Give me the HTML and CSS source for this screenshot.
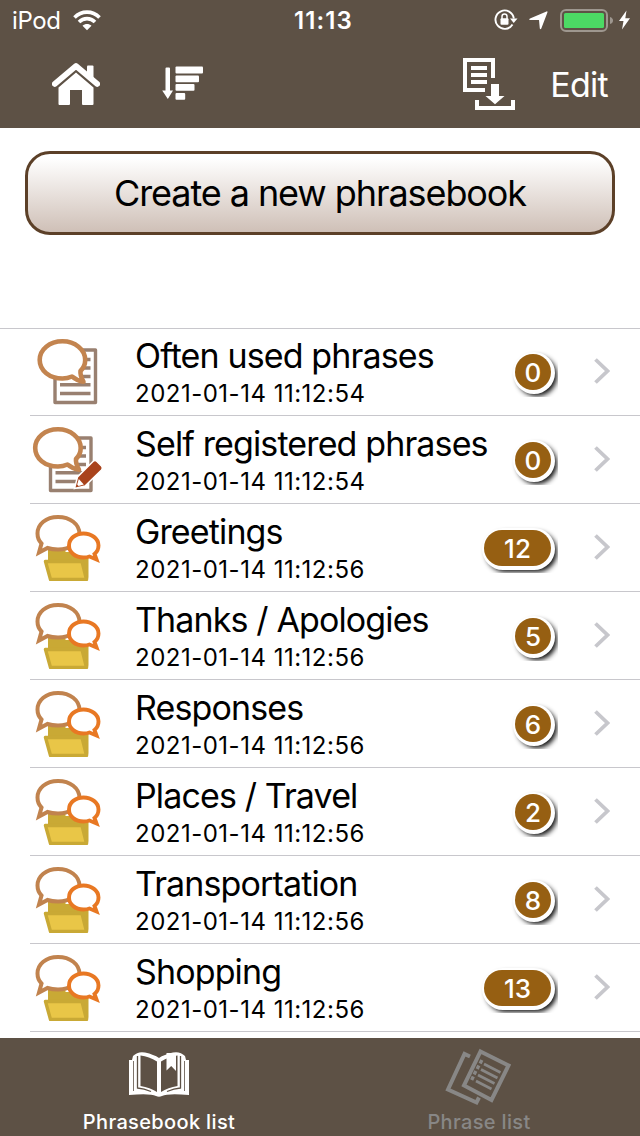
FILE: index.html
```html
<!DOCTYPE html>
<html lang="en">
<head>
    <meta charset="UTF-8">
    <meta name="viewport" content="width=device-width, initial-scale=1.0">
    <title>Phrasebook list</title>
    <link rel="stylesheet" href="styles.css">
</head>
<body>
    <!-- Shared row icons -->
    <svg class="sprite" aria-hidden="true">
        <symbol id="icon-sheet" viewBox="0 0 70 70">
            <path d="M21 15H61.500V67.500H21Z" fill="#fff" stroke="#998070" stroke-width="3.400" stroke-linejoin="round"/>
            <path d="M26 24.500H56.500M26 33H56.500M26 41.500H56.500M26 49.800H56.500M26 58.500H56.500" stroke="#998070" stroke-width="3.600"/>
            <path d="M28.500 6.300C41 6.300 51.200 14.500 51.200 25C51.200 29.500 49.500 33 46.500 36C46 40.500 47.500 43 49.500 46.800C45 46 41 44 38 41.500C35 42.800 32 43.500 28.500 43.500C15.500 43.500 5.700 35.500 5.700 25C5.700 14.500 15.500 6.300 28.500 6.300Z" fill="#fff" stroke="#c3844f" stroke-width="4.600" stroke-linejoin="round"/>
        </symbol>
        <symbol id="icon-folder" viewBox="0 0 70 70">
            <path d="M14 37H31.500V41H54.500V66Q54.500 70 51 70H16.500L14 63Z" fill="#c9a935"/>
            <path d="M11.500 50.500H48L52.500 68.500H16.500Z" fill="#e9c647" stroke="#c9a935" stroke-width="3.400" stroke-linejoin="round"/>
            <path d="M24 6C36 6 45.500 13 45.500 23C45.500 32 36 38.500 24 38.500C20 38.500 16.500 38 13.500 37L5 41.500L7.500 32.500C4.500 29.500 3.500 26 3.500 22.500C3.500 13 12 6 24 6Z" fill="#fff" stroke="#c1834e" stroke-width="4"/>
            <path d="M49.500 22.500C57.500 22.500 64.500 27.500 64.500 34.500C64.500 38 63 41 60.500 43L62.500 48.500L55.500 45.500C53.500 46.300 51.500 46.500 49.500 46.500C41.500 46.500 35 41.500 35 34.500C35 27.500 41.500 22.500 49.500 22.500Z" fill="#fff" stroke="#e87823" stroke-width="3.900"/>
        </symbol>
        <symbol id="icon-chevron" viewBox="0 0 16 26">
            <path d="M1.500 1.500L13.500 13L1.500 24.500" fill="none" stroke="#c7c7cc" stroke-width="3.800"/>
        </symbol>
    </svg>

    <header class="header">
        <div class="status-bar">
            <div class="status-left">
                <span class="device">iPod</span>
                <svg width="28" height="21" viewBox="0 0 28 21" fill="none" stroke="#fff">
                    <path d="M1.500 7.500C8.500 .3 19.500 .3 26.500 7.500" stroke-width="3.600"/>
                    <path d="M6 12C10.500 7.500 17.500 7.500 22 12" stroke-width="3.600"/>
                    <path d="M9.500 15.700C12 13.300 16 13.300 18.500 15.700L14 20.200Z" fill="#fff" stroke="none"/>
                </svg>
            </div>
            <div class="clock">11:13</div>
            <div class="status-right">
                <!-- Rotation lock -->
                <svg class="rotation" width="24" height="22" viewBox="0 0 24 22" fill="none" stroke="#fff">
                    <path d="M18.500 15.500A9.200 9.200 0 1 1 19.800 9.500" stroke-width="1.900"/>
                    <path d="M16 9.500H23.500L19.700 14Z" fill="#fff" stroke="none"/>
                    <rect x="6.500" y="9.300" width="8" height="6.500" rx="1" fill="#fff" stroke="none"/>
                    <path d="M8 10V7.500Q8 5 10.500 5T13 7.500V10" stroke-width="1.500"/>
                </svg>
                <svg class="location" width="19" height="19" viewBox="0 0 19 19">
                    <path d="M17.500 .4Q18.800 0 18.400 1.400L12.300 17.500Q11.500 19 10.800 17.500L10 9H1Q-.6 8.400 1 7.400Z" fill="#fff"/>
                </svg>
                <svg class="battery" width="54" height="24" viewBox="0 0 54 24">
                    <rect x="1" y="1" width="46" height="21" rx="5" fill="none" stroke="#9e978f" stroke-width="2"/>
                    <rect x="4" y="4" width="40" height="15" rx="1.500" fill="#4cd964"/>
                    <path d="M50 8Q53 9 53 11.500T50 15Z" fill="#9e978f"/>
                </svg>
                <svg width="13" height="20" viewBox="0 0 13 20">
                    <path d="M8.500 .5L1 11H5.500L4 19.500L12 8.300H7.300Z" fill="#fff"/>
                </svg>
            </div>
        </div>
        <nav class="toolbar">
            <svg class="home" width="48" height="43" viewBox="0 0 48 43">
                <path d="M35 12V3.500Q35 2.500 36 2.500H40.500Q41.500 2.500 41.500 3.500V17Z" fill="#fff"/>
                <path d="M2.700 21L24 3L45.300 21" fill="none" stroke="#fff" stroke-width="5.600" stroke-linecap="round" stroke-linejoin="round"/>
                <path d="M24 9.500L41.500 24.500V41Q41.500 42 40.500 42H31Q30 42 30 41V27H18V41Q18 42 17 42H7.500Q6.500 42 6.500 41V24.500Z" fill="#fff"/>
            </svg>
            <svg class="sort" width="42" height="36" viewBox="0 0 42 36" fill="#fff">
                <path d="M3.500 2.500Q3.500 1.500 4.500 1.500H7Q8 1.500 8 2.500V24.500H11L5.800 33L.2 24.500H3.500Z"/>
                <rect x="13.500" y=".5" width="27.500" height="7" rx="1"/>
                <rect x="13.500" y="9.500" width="23.500" height="6.700" rx="1"/>
                <rect x="13.500" y="18" width="19" height="6.700" rx="1"/>
                <rect x="13.500" y="27" width="9.700" height="6.700" rx="1"/>
            </svg>
            <!-- Import list -->
            <svg class="import" width="52" height="52" viewBox="0 0 52 52" fill="none" stroke="#fff" stroke-width="4">
                <path d="M22 32H2V2H30V20"/>
                <path d="M8 10H24M8 17H24M8 24H24"/>
                <path d="M14 42V50H50V42"/>
                <path d="M28 26H36V38H41.500L32 46.300L22.500 38H28Z" fill="#fff" stroke="none"/>
            </svg>
            <span class="edit">Edit</span>
        </nav>
    </header>

    <main class="content">
        <button class="create-btn"><span>Create a new phrasebook</span></button>

        <ul class="phrasebooks">
            <li class="row">
                <svg class="row-icon"><use href="#icon-sheet"/></svg>
                <div class="info"><div class="title">Often used phrases</div><div class="date">2021-01-14 11:12:54</div></div>
                <div class="badge-box"><span class="badge">0</span></div>
                <svg class="chevron"><use href="#icon-chevron"/></svg>
            </li>
            <li class="row">
                <svg class="row-icon" viewBox="0 0 70 70">
                    <use href="#icon-sheet" x="-4.500" width="70" height="70"/>
                    <path d="M40.500 65.500L43.500 54L59 38.500Q61 36.500 63 38.500L67.500 43Q69.300 45 67.500 47L51 63Z" fill="#a9431c" stroke="#fff" stroke-width="1.500"/>
                    <path d="M44.800 56L49.800 61.500L44.500 63L43.200 61.500Z" fill="#fff"/>
                </svg>
                <div class="info"><div class="title">Self registered phrases</div><div class="date">2021-01-14 11:12:54</div></div>
                <div class="badge-box"><span class="badge">0</span></div>
                <svg class="chevron"><use href="#icon-chevron"/></svg>
            </li>
            <li class="row">
                <svg class="row-icon"><use href="#icon-folder"/></svg>
                <div class="info"><div class="title">Greetings</div><div class="date">2021-01-14 11:12:56</div></div>
                <div class="badge-box"><span class="badge wide">12</span></div>
                <svg class="chevron"><use href="#icon-chevron"/></svg>
            </li>
            <li class="row">
                <svg class="row-icon"><use href="#icon-folder"/></svg>
                <div class="info"><div class="title">Thanks / Apologies</div><div class="date">2021-01-14 11:12:56</div></div>
                <div class="badge-box"><span class="badge">5</span></div>
                <svg class="chevron"><use href="#icon-chevron"/></svg>
            </li>
            <li class="row">
                <svg class="row-icon"><use href="#icon-folder"/></svg>
                <div class="info"><div class="title">Responses</div><div class="date">2021-01-14 11:12:56</div></div>
                <div class="badge-box"><span class="badge">6</span></div>
                <svg class="chevron"><use href="#icon-chevron"/></svg>
            </li>
            <li class="row">
                <svg class="row-icon"><use href="#icon-folder"/></svg>
                <div class="info"><div class="title">Places / Travel</div><div class="date">2021-01-14 11:12:56</div></div>
                <div class="badge-box"><span class="badge">2</span></div>
                <svg class="chevron"><use href="#icon-chevron"/></svg>
            </li>
            <li class="row">
                <svg class="row-icon"><use href="#icon-folder"/></svg>
                <div class="info"><div class="title">Transportation</div><div class="date">2021-01-14 11:12:56</div></div>
                <div class="badge-box"><span class="badge">8</span></div>
                <svg class="chevron"><use href="#icon-chevron"/></svg>
            </li>
            <li class="row">
                <svg class="row-icon"><use href="#icon-folder"/></svg>
                <div class="info"><div class="title">Shopping</div><div class="date">2021-01-14 11:12:56</div></div>
                <div class="badge-box"><span class="badge wide">13</span></div>
                <svg class="chevron"><use href="#icon-chevron"/></svg>
            </li>
        </ul>
    </main>

    <footer class="tab-bar">
        <div class="tab active">
            <svg width="62" height="46" viewBox="0 0 62 46">
                <path d="M1 9H4L5 5Q10 0 17 1.500Q26 3.500 31 7Q36 3.500 45 1.500Q52 0 57 5L58 9H61V44Q40 42 34 45Q31 46.500 28 45Q22 42 1 44Z" fill="#fff"/>
                <path d="M12.500 4.500Q21 5.500 29 10.500V41Q22 36.500 12.500 35Z" fill="#5d5145"/>
                <path d="M49.500 4.500Q41 5.500 33 10.500V41Q40 36.500 49.500 35Z" fill="#5d5145"/>
                <path d="M9.500 5V37Q16 37.500 23 40.500M52.500 5V37Q46 37.500 39 40.500" fill="none" stroke="#5d5145" stroke-width="1.300"/>
                <path d="M5.500 10V40M56.500 10V40" stroke="#5d5145" stroke-width=".8"/>
                <path d="M38.500 2H48V20L43.200 15L38.500 19.500Z" fill="#fff"/>
            </svg>
            <span>Phrasebook list</span>
        </div>
        <div class="tab">
            <svg width="68" height="58" viewBox="0 0 68 58" fill="none" stroke="#888786" stroke-width="4">
                <path d="M25 8.500L19.500 6L3 41.500L31.500 54.500L34 49.500"/>
                <path d="M35.500 3.500L63.500 17.500L46.500 52L19 37.500Z"/>
                <path d="M39 16L55.500 24.500M36 21.500L52.500 30M33 27L49.500 35.500M31 33L46.500 41" stroke-width="2.700"/>
                <path d="M34.500 13L37.500 14.500M31.500 18.500L34.500 20M28.500 24L31.500 25.500M26 29.500L29 31" stroke-width="3.700"/>
            </svg>
            <span>Phrase list</span>
        </div>
    </footer>
</body>
</html>
```

FILE: styles.css
```css
/* General Page */
* {
    box-sizing: border-box;
}
body, html {
    margin: 0;
    padding: 0;
    height: 100%;
    overflow: hidden;
}
body {
    display: flex;
    flex-direction: column;
    font-family: Inter, "Liberation Sans", sans-serif;
    color: #000;
    background: #fff;
}
svg {
    display: block;
    flex: none;
}
.sprite {
    position: absolute;
    width: 0;
    height: 0;
}

/* Header */
.header {
    flex: none;
    height: 128px;
    background: #5d5145;
    color: #fff;
}
.status-bar {
    display: grid;
    grid-template-columns: 1fr auto 1fr;
    align-items: center;
    height: 40px;
    padding: 0 9px 0 12px;
    font-size: 24px;
}
.status-left, .status-right {
    display: flex;
    align-items: center;
}
.status-left {
    gap: 12px;
}
.device {
    letter-spacing: -0.4px;
}
.clock {
    font-weight: 600;
    letter-spacing: 1.1px;
    margin-left: 4px;
}
.status-right {
    justify-content: flex-end;
}
.rotation {
    margin-right: 1px;
}
.location {
    margin: 0 12px 0 10px;
}
.battery {
    margin: 2px 4px 0 0;
}
.toolbar {
    display: flex;
    align-items: center;
    height: 88px;
    padding: 0 32px 0 52px;
}
.sort {
    margin-left: 62px;
}
.import {
    margin-left: auto;
}
.edit {
    margin-left: 35px;
    font-size: 34px;
    letter-spacing: -0.7px;
}

/* Create Button */
.content {
    flex: 1;
    min-height: 0;
    overflow: hidden;
}
.create-btn {
    display: block;
    width: 590px;
    height: 84px;
    margin: 23px auto 93px;
    padding: 0;
    border: 3px solid #5c4028;
    border-radius: 25px;
    background: linear-gradient(#fff 5%, #cfc0b7);
    font-family: inherit;
    font-size: 36px;
    letter-spacing: -1.08px;
    color: #000;
}

/* Phrasebook Rows */
.phrasebooks {
    margin: 0;
    padding: 0;
    list-style: none;
    border-top: 1px solid #c8c7cc;
}
.row {
    display: flex;
    align-items: flex-start;
    height: 88px;
    margin-left: 30px;
    border-bottom: 1px solid #c8c7cc;
}
.row:first-child {
    margin-top: -1px;
}
.row-icon {
    width: 70px;
    height: 70px;
    margin: 7px 0 0 4px;
    overflow: visible;
}
.info {
    flex: 1;
    padding: 7px 0 0 31px;
    white-space: nowrap;
}
.title {
    font-size: 34px;
    line-height: 41px;
    letter-spacing: -0.87px;
}
.date {
    font-size: 24px;
    line-height: 36px;
    letter-spacing: 0.5px;
}
/* The box cuts off the badge shadow */
.badge-box {
    display: flex;
    justify-content: flex-end;
    width: 84px;
    height: 48px;
    margin-top: 21px;
    padding: 5px 7px 0 0;
    overflow: hidden;
}
.badge {
    width: 36px;
    height: 36px;
    border-radius: 18px;
    background: #965f12;
    box-shadow: 1px 1px 0 3px #fff, 4px 4px 5px 2px #111;
    color: #fff;
    font-size: 26px;
    font-weight: 500;
    line-height: 37px;
    text-align: center;
}
.badge.wide {
    width: 67px;
}
.chevron {
    width: 16px;
    height: 26px;
    margin: 30px 30px 0 36px;
}

/* Tab Bar */
.tab-bar {
    display: grid;
    grid-template-columns: 1fr 1fr;
    flex: none;
    height: 98px;
    background: #5d5145;
}
.tab {
    display: flex;
    flex-direction: column;
    align-items: center;
    justify-content: space-between;
    padding: 13px 2px 2px 0;
    color: #888786;
    font-size: 20px;
    font-weight: 500;
    letter-spacing: 0.35px;
}
.tab:last-child {
    padding-top: 10px;
}
.tab.active {
    color: #fff;
}
```
